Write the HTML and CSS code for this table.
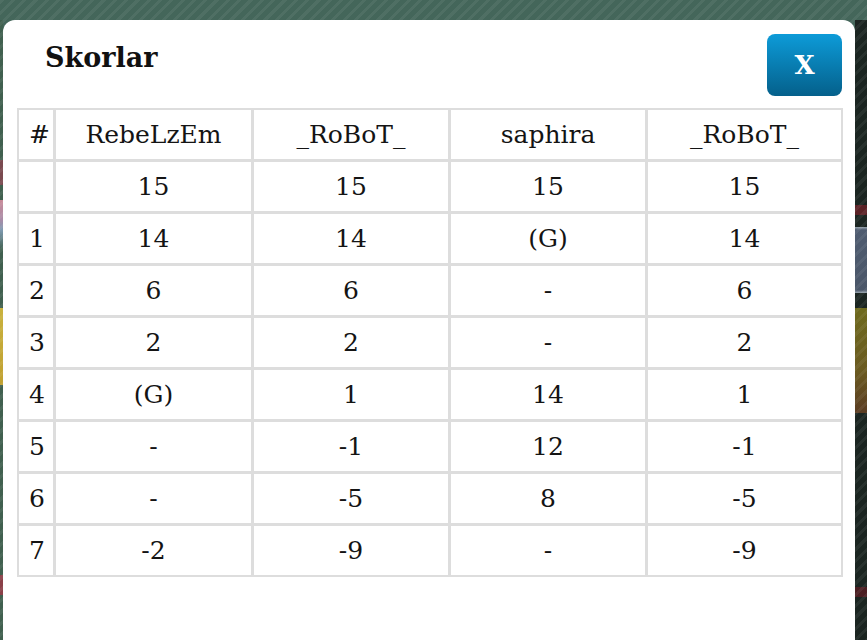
FILE: index.html
```html
<!DOCTYPE html>
<html lang="tr">
<head>
<meta charset="utf-8">
<title>Skorlar</title>
<link rel="stylesheet" href="styles.css">
</head>
<body>
<div class="backdrop">
  <div class="modal">
    <div class="modal-header">
      <h4 class="title">Skorlar</h4>
      <button class="close-btn" type="button">X</button>
    </div>
    <div class="modal-body">
      <table class="scores">
        <colgroup>
          <col class="col-num">
          <col class="col-a"><col class="col-b"><col class="col-c"><col>
        </colgroup>
        <thead>
          <tr><th class="num">#</th><th>RebeLzEm</th><th>_RoBoT_</th><th>saphira</th><th>_RoBoT_</th></tr>
        </thead>
        <tbody>
          <tr><td class="num"></td><td>15</td><td>15</td><td>15</td><td>15</td></tr>
          <tr><td class="num">1</td><td>14</td><td>14</td><td>(G)</td><td>14</td></tr>
          <tr><td class="num">2</td><td>6</td><td>6</td><td>-</td><td>6</td></tr>
          <tr><td class="num">3</td><td>2</td><td>2</td><td>-</td><td>2</td></tr>
          <tr><td class="num">4</td><td>(G)</td><td>1</td><td>14</td><td>1</td></tr>
          <tr><td class="num">5</td><td>-</td><td>-1</td><td>12</td><td>-1</td></tr>
          <tr><td class="num">6</td><td>-</td><td>-5</td><td>8</td><td>-5</td></tr>
          <tr><td class="num">7</td><td>-2</td><td>-9</td><td>-</td><td>-9</td></tr>
        </tbody>
      </table>
    </div>
  </div>
</div>
</body>
</html>
```
FILE: styles.css
```css
html, body {
  margin: 0;
  height: 100%;
  overflow: hidden;
}

body {
  font-family: "DejaVu Serif", "Liberation Serif", serif;
  color: #141414;
}

.backdrop {
  box-sizing: border-box;
  height: 100%;
  padding: 20px 12px 0 3px;
  background:
    repeating-linear-gradient(135deg, rgba(255,255,255,0.06) 0 3px, rgba(0,0,0,0) 3px 8px),
    linear-gradient(to bottom,
      #40604f 0, #40604f 140px,
      #7a4a50 140px, #7a4a50 165px,
      #40604f 165px, #40604f 180px,
      #c88a98 180px, #a88ca8 200px, #7f9ab0 210px,
      #40604f 230px, #40604f 288px,
      #c9b23e 288px, #c0a030 365px,
      #40604f 365px, #40604f 555px,
      #8a4048 555px, #8a4048 575px,
      #40604f 575px) left 0 top 20px / 3px calc(100% - 20px) no-repeat,
    linear-gradient(to bottom,
      #1b2521 0, #1b2521 185px,
      #5a2226 185px, #5a2226 195px,
      #1b2521 195px, #1b2521 207px,
      #9aa6b0 207px, #4f5c70 210px, #4a5668 270px, #9aa6b0 273px,
      #1b2521 273px, #1b2521 288px,
      #6e6a1e 288px, #6a5a20 350px, #5a3c22 393px,
      #1b2521 393px, #1b2521 567px,
      #4a1e22 567px, #4a1e22 577px,
      #1b2521 577px) right 0 top 20px / 12px calc(100% - 20px) no-repeat,
    #44665a;
}

.modal {
  background: #fff;
  border-radius: 12px 12px 0 0;
  min-height: 640px;
}

.modal-header {
  display: flex;
  justify-content: space-between;
  align-items: flex-start;
  padding: 14px 13px 12px 14px;
}

.title {
  margin: 8px 0 0 28px;
  font-size: 27px;
  font-weight: bold;
  line-height: 1.2;
  color: #111;
}

.close-btn {
  width: 75px;
  height: 62px;
  border: 0;
  border-radius: 8px;
  background: linear-gradient(to bottom, #0d9bd8, #04608b);
  color: #fff;
  font-family: "DejaVu Serif", serif;
  font-weight: bold;
  font-size: 26px;
  padding: 0;
}

.modal-body {
  padding: 0 12px 0 14px;
}

.scores {
  width: 100%;
  table-layout: fixed;
  border-collapse: separate;
  border-spacing: 0;
  border: 2px solid #dddddd;
  font-size: 25px;
}

.col-num {
  width: 37px;
}

.col-a {
  width: 198px;
}

.col-b,
.col-c {
  width: 197px;
}

.scores th,
.scores td {
  padding: 0;
  line-height: 49px;
  height: 49px;
  font-weight: normal;
  text-align: center;
  border-right: 3px solid #dddddd;
  border-bottom: 3px solid #dddddd;
  white-space: nowrap;
}

.scores th:last-child,
.scores td:last-child {
  border-right: 0;
}

.scores tbody tr:last-child td {
  border-bottom: 0;
}

.scores .num {
  text-align: left;
  padding-left: 10px;
}
```
